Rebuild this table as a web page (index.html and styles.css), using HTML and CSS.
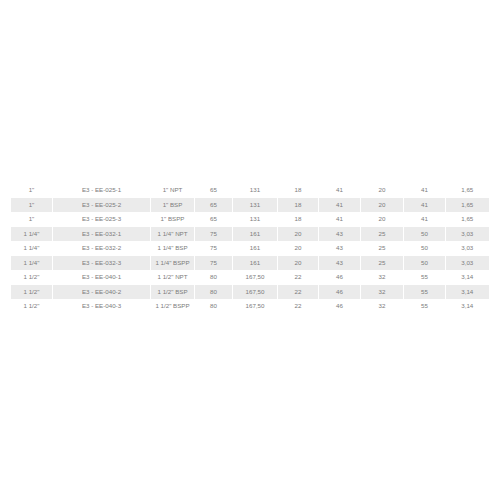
FILE: index.html
```html
<!DOCTYPE html>
<html>
<head>
<meta charset="utf-8">
<link rel="stylesheet" href="styles.css">
</head>
<body>
<div class="wrap">
<table class="spec">
<colgroup>
<col class="c1"><col class="c2"><col class="c3"><col class="c4"><col class="c5"><col class="c6"><col class="c7"><col class="c8"><col class="c9"><col class="c10">
</colgroup>
<tbody>
<tr><td>1"</td><td>E3 - EE-025-1</td><td>1" NPT</td><td>65</td><td>131</td><td>18</td><td>41</td><td>20</td><td>41</td><td>1,65</td></tr>
<tr><td>1"</td><td>E3 - EE-025-2</td><td>1" BSP</td><td>65</td><td>131</td><td>18</td><td>41</td><td>20</td><td>41</td><td>1,65</td></tr>
<tr><td>1"</td><td>E3 - EE-025-3</td><td>1" BSPP</td><td>65</td><td>131</td><td>18</td><td>41</td><td>20</td><td>41</td><td>1,65</td></tr>
<tr><td>1 1/4"</td><td>E3 - EE-032-1</td><td>1 1/4" NPT</td><td>75</td><td>161</td><td>20</td><td>43</td><td>25</td><td>50</td><td>3,03</td></tr>
<tr><td>1 1/4"</td><td>E3 - EE-032-2</td><td>1 1/4" BSP</td><td>75</td><td>161</td><td>20</td><td>43</td><td>25</td><td>50</td><td>3,03</td></tr>
<tr><td>1 1/4"</td><td>E3 - EE-032-3</td><td>1 1/4" BSPP</td><td>75</td><td>161</td><td>20</td><td>43</td><td>25</td><td>50</td><td>3,03</td></tr>
<tr><td>1 1/2"</td><td>E3 - EE-040-1</td><td>1 1/2" NPT</td><td>80</td><td>167,50</td><td>22</td><td>46</td><td>32</td><td>55</td><td>3,14</td></tr>
<tr><td>1 1/2"</td><td>E3 - EE-040-2</td><td>1 1/2" BSP</td><td>80</td><td>167,50</td><td>22</td><td>46</td><td>32</td><td>55</td><td>3,14</td></tr>
<tr><td>1 1/2"</td><td>E3 - EE-040-3</td><td>1 1/2" BSPP</td><td>80</td><td>167,50</td><td>22</td><td>46</td><td>32</td><td>55</td><td>3,14</td></tr>
</tbody>
</table>
</div>
</body>
</html>
```

FILE: styles.css
```css
html, body {
  margin: 0;
  padding: 0;
  background: #ffffff;
}
.wrap {
  padding: 183px 0 0 10px;
}
.spec {
  width: 478px;
  table-layout: fixed;
  border-collapse: collapse;
  font-family: "Liberation Sans", Arial, sans-serif;
  font-size: 6.2px;
  color: #7c7c7c;
}
.spec td {
  height: 14.5px;
  padding: 0;
  text-align: center;
  vertical-align: middle;
  border-left: 1px solid #ffffff;
  white-space: nowrap;
  line-height: 1;
}
.spec tr:nth-child(even) td {
  background: #ebebeb;
}
.c1 { width: 42px; }
.c2 { width: 98px; }
.c3 { width: 44px; }
.c4 { width: 38px; }
.c5 { width: 45px; }
.c6 { width: 41px; }
.c7 { width: 42px; }
.c8 { width: 43px; }
.c9 { width: 42px; }
.c10 { width: 43px; }
```
